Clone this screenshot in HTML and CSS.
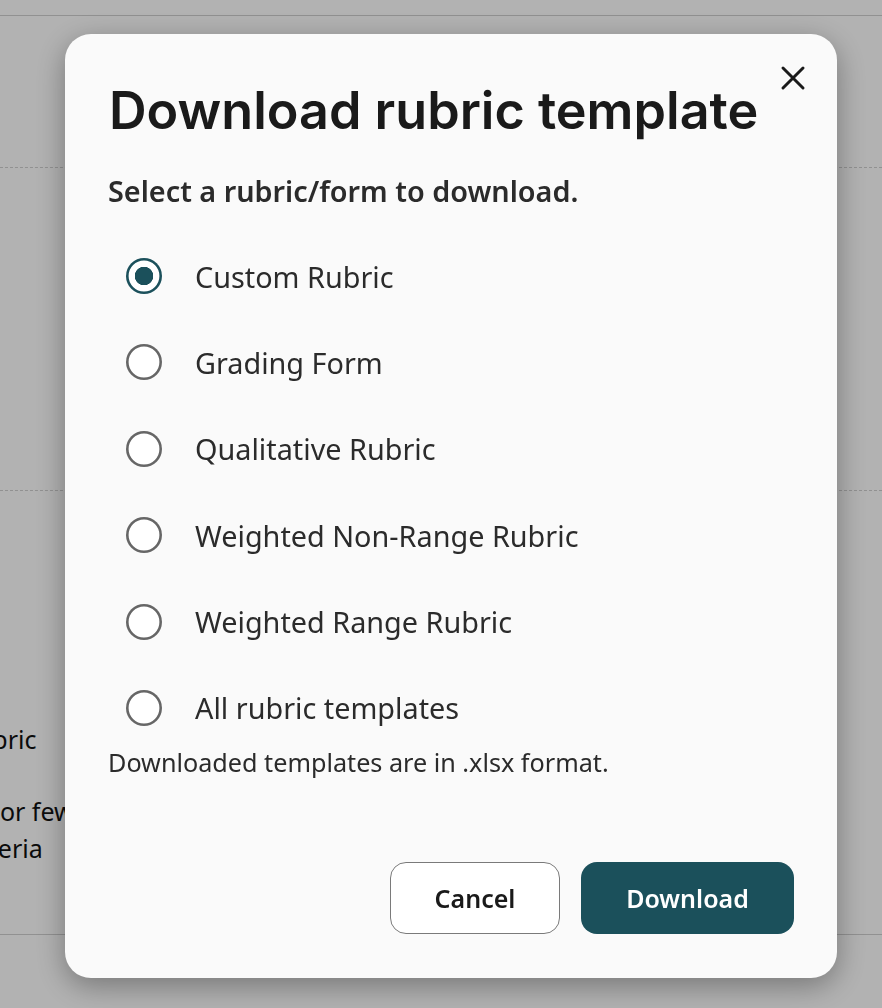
FILE: index.html
```html
<!DOCTYPE html>
<html lang="en">
<head>
  <meta charset="UTF-8">
  <title>Download rubric template</title>
  <link rel="stylesheet" href="styles.css">
</head>
<body>

<!-- page behind the dialog -->
<div class="page">
  <div class="row row-top"></div>
  <div class="row row-dashed row-one"></div>
  <div class="row row-dashed row-two"></div>
  <div class="row row-last">
    <p class="row-text row-name">Custom Rubric</p>
    <p class="row-text row-note">Six or fewer<br>criteria</p>
  </div>
</div>

<div class="backdrop"></div>

<div class="modal">
  <button class="modal-close" aria-label="Close">
    <svg width="26" height="26" viewBox="0 0 26 26"><path d="M3 3 L23 23 M23 3 L3 23" fill="none" stroke="#1a1a1a" stroke-width="3" stroke-linecap="round"/></svg>
  </button>
  <h1>Download rubric template</h1>
  <p class="modal-lead">Select a rubric/form to download.</p>

  <div class="options">
    <label class="option"><input type="radio" name="rubric" checked><span>Custom Rubric</span></label>
    <label class="option"><input type="radio" name="rubric"><span>Grading Form</span></label>
    <label class="option"><input type="radio" name="rubric"><span>Qualitative Rubric</span></label>
    <label class="option"><input type="radio" name="rubric"><span>Weighted Non-Range Rubric</span></label>
    <label class="option"><input type="radio" name="rubric"><span>Weighted Range Rubric</span></label>
    <label class="option"><input type="radio" name="rubric"><span>All rubric templates</span></label>
  </div>

  <p class="modal-hint">Downloaded templates are in .xlsx format.</p>

  <div class="modal-actions">
    <button class="btn btn-cancel">Cancel</button>
    <button class="btn btn-download">Download</button>
  </div>
</div>

</body>
</html>
```

FILE: styles.css
```css
:root {
  --teal: #1b505b;
  --text: #2b2b2b;
  --line: #d0d0d0;
}

html, body {
  margin: 0;
  padding: 0;
  height: 100%;
  overflow: hidden;
}

body {
  font-family: "Noto Sans", Arial, sans-serif;
  color: var(--text);
  background: #fff;
}

.page {
  height: 100%;
}

.row {
  box-sizing: border-box;
  border-bottom: 1px solid var(--line);
}

.row-top {
  height: 16px;
}

.row-dashed {
  border-bottom-style: dashed;
}

.row-one {
  height: 152px;
}

.row-two {
  height: 323px;
}

.row-last {
  height: 444px;
  padding-top: 230px;
}

.row-text {
  margin: 0;
  font-size: 25px;
  line-height: 37px;
  color: #111;
  white-space: nowrap;
}

.row-name {
  margin-left: -136px;
}

.row-note {
  margin-top: 35px;
  margin-left: -40px;
}

.backdrop {
  position: fixed;
  top: 0;
  left: 0;
  width: 100%;
  height: 100%;
  background: rgba(0, 0, 0, 0.3);
}

.modal {
  position: fixed;
  top: 34px;
  left: 65px;
  width: 772px;
  height: 944px;
  box-sizing: border-box;
  padding: 47px 43px 44px 43px;
  display: flex;
  flex-direction: column;
  background: #fafafa;
  border-radius: 26px;
  box-shadow: 0 8px 30px rgba(0, 0, 0, 0.34);
}

.modal-close {
  position: absolute;
  top: 31px;
  right: 31px;
  width: 26px;
  height: 26px;
  padding: 0;
  border: none;
  background: none;
  cursor: pointer;
}

.modal h1 {
  margin: 0 0 0 1px;
  font-family: Inter, "Noto Sans", sans-serif;
  font-size: 52.1px;
  line-height: 60px;
  font-weight: 600;
  color: #1a1a1a;
  white-space: nowrap;
}

.modal-lead {
  margin: 31px 0 0;
  font-size: 28.8px;
  line-height: 38px;
  font-weight: 600;
}

.options {
  margin-top: 46px;
  display: flex;
  flex-direction: column;
  gap: 46.4px;
}

.option {
  height: 40px;
  display: flex;
  align-items: center;
  gap: 33px;
  padding-left: 18px;
  font-size: 28.8px;
}

.option input {
  appearance: none;
  margin: 0;
  width: 36px;
  height: 36px;
  border-radius: 50%;
  background: #fff;
  box-shadow: inset 0 0 0 2.6px #666;
}

.option input:checked {
  box-shadow: inset 0 0 0 2.6px var(--teal);
  background: radial-gradient(circle, var(--teal) 0 9px, #fff 9.5px);
}

.modal-hint {
  margin: 16px 0 0;
  font-size: 25.2px;
  line-height: 36px;
}

.modal-actions {
  margin-top: auto;
  display: flex;
  justify-content: flex-end;
  gap: 21px;
}

.btn {
  height: 72px;
  border-radius: 16px;
  font-family: inherit;
  font-size: 25px;
  font-weight: 600;
  cursor: pointer;
}

.btn-cancel {
  width: 170px;
  background: #fff;
  color: #1a1a1a;
  border: 1px solid #7a7a7a;
}

.btn-download {
  width: 213px;
  background: var(--teal);
  color: #fff;
  border: none;
}
```
